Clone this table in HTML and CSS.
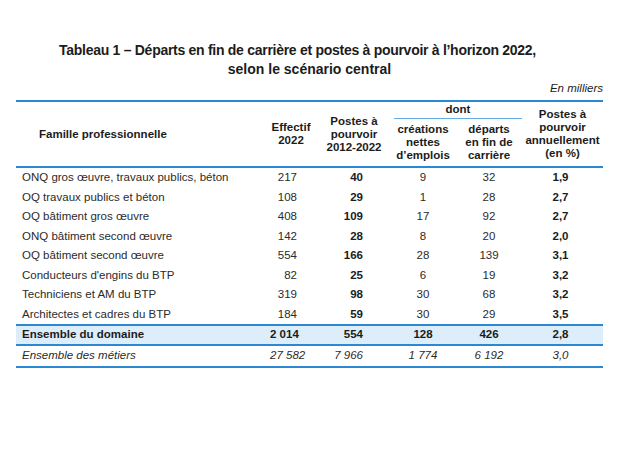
FILE: index.html
```html
<!DOCTYPE html>
<html lang="fr">
<head>
    <meta charset="UTF-8">
    <title>Tableau 1</title>
    <link rel="stylesheet" href="styles.css">
</head>
<body>
<div class="page">
    <h1 class="title">
        <span class="title-line first">Tableau 1 – Départs en fin de carrière et postes à pourvoir à l’horizon 2022,</span>
        <span class="title-line">selon le scénario central</span>
    </h1>
    <div class="unit">En milliers</div>
    <table class="data">
        <colgroup>
            <col class="c-fam">
            <col class="c-eff">
            <col class="c-postes">
            <col class="c-crea">
            <col class="c-dep">
            <col class="c-ann">
        </colgroup>
        <thead>
            <tr>
                <th rowspan="2" class="fam">Famille professionnelle</th>
                <th rowspan="2">Effectif<br>2022</th>
                <th rowspan="2">Postes à<br>pourvoir<br>2012-2022</th>
                <th colspan="2" class="dont"><span>dont</span></th>
                <th rowspan="2">Postes à<br>pourvoir<br>annuellement<br>(en %)</th>
            </tr>
            <tr class="sub">
                <th>créations<br>nettes<br>d’emplois</th>
                <th>départs<br>en fin de<br>carrière</th>
            </tr>
        </thead>
        <tbody>
            <tr><td class="label">ONQ gros œuvre, travaux publics, béton</td><td class="eff">217</td><td class="postes">40</td><td class="mid">9</td><td class="mid">32</td><td class="ann">1,9</td></tr>
            <tr><td class="label">OQ travaux publics et béton</td><td class="eff">108</td><td class="postes">29</td><td class="mid">1</td><td class="mid">28</td><td class="ann">2,7</td></tr>
            <tr><td class="label">OQ bâtiment gros œuvre</td><td class="eff">408</td><td class="postes">109</td><td class="mid">17</td><td class="mid">92</td><td class="ann">2,7</td></tr>
            <tr><td class="label">ONQ bâtiment second œuvre</td><td class="eff">142</td><td class="postes">28</td><td class="mid">8</td><td class="mid">20</td><td class="ann">2,0</td></tr>
            <tr><td class="label">OQ bâtiment second œuvre</td><td class="eff">554</td><td class="postes">166</td><td class="mid">28</td><td class="mid">139</td><td class="ann">3,1</td></tr>
            <tr><td class="label">Conducteurs d'engins du BTP</td><td class="eff">82</td><td class="postes">25</td><td class="mid">6</td><td class="mid">19</td><td class="ann">3,2</td></tr>
            <tr><td class="label">Techniciens et AM du BTP</td><td class="eff">319</td><td class="postes">98</td><td class="mid">30</td><td class="mid">68</td><td class="ann">3,2</td></tr>
            <tr><td class="label">Architectes et cadres du BTP</td><td class="eff">184</td><td class="postes">59</td><td class="mid">30</td><td class="mid">29</td><td class="ann">3,5</td></tr>
            <tr class="total"><td class="label">Ensemble du domaine</td><td class="eff">2 014</td><td class="postes">554</td><td class="mid">128</td><td class="mid">426</td><td class="ann">2,8</td></tr>
            <tr class="all"><td class="label">Ensemble des métiers</td><td class="eff">27 582</td><td class="postes">7 966</td><td class="mid">1 774</td><td class="mid">6 192</td><td class="ann">3,0</td></tr>
        </tbody>
    </table>
</div>
</body>
</html>
```

FILE: styles.css
```css
body {
    margin: 0;
    font-family: "Liberation Sans", Arial, sans-serif;
    color: #1c1c1c;
    background: #fff;
}
.page {
    width: 587px;
    margin-left: 16px;
    padding-top: 41px;
}
.title {
    margin: 0;
    font-size: 14px;
    font-weight: bold;
    line-height: 18.5px;
    text-align: center;
}
.title-line {
    display: block;
}
.title-line.first {
    margin-right: 24px;
    letter-spacing: -0.28px;
}
.unit {
    font-size: 11.5px;
    font-style: italic;
    text-align: right;
    line-height: 14px;
    margin-top: 3px;
    height: 19px;
}
.data {
    width: 587px;
    table-layout: fixed;
    border-collapse: collapse;
    font-size: 11.5px;
    border-top: 2px solid #2a89d2;
    border-bottom: 2px solid #2a89d2;
}
.c-fam { width: 248px; }
.c-eff { width: 54px; }
.c-postes { width: 72px; }
.c-crea { width: 66px; }
.c-dep { width: 66px; }
.c-ann { width: 81px; }

th {
    font-weight: bold;
    line-height: 13px;
    text-align: center;
    padding: 0;
    vertical-align: middle;
}
thead {
    border-bottom: 2px solid #2a89d2;
}
thead tr:first-child {
    height: 18px;
}
tr.sub {
    height: 48px;
}
th.fam {
    text-align: left;
    padding-left: 23px;
}
th.dont {
    padding: 0;
    vertical-align: bottom;
}
th.dont span {
    display: block;
    margin-left: 4px;
    padding: 1px 0 2px;
    border-bottom: 1px solid #63ade6;
}
td {
    padding: 3px 6px;
    line-height: 13.5px;
    white-space: nowrap;
    color: #2b2b2b;
}
td.eff {
    text-align: right;
    padding-right: 21px;
}
td.postes {
    text-align: right;
    padding-right: 27px;
    font-weight: bold;
    color: #1c1c1c;
}
td.mid {
    text-align: center;
}
td.ann {
    text-align: center;
    padding-right: 10px;
    font-weight: bold;
    color: #1c1c1c;
}
tr.total {
    background: #ddedf9;
    font-weight: bold;
    border-top: 2px solid #2a89d2;
    border-bottom: 2px solid #2a89d2;
}
tr.total td {
    padding-top: 2px;
    padding-bottom: 2px;
    line-height: 13.5px;
    color: #1c1c1c;
}
tr.all td {
    font-style: italic;
    font-weight: normal;
    padding-top: 3px;
    padding-bottom: 4px;
    color: #2b2b2b;
}
```
